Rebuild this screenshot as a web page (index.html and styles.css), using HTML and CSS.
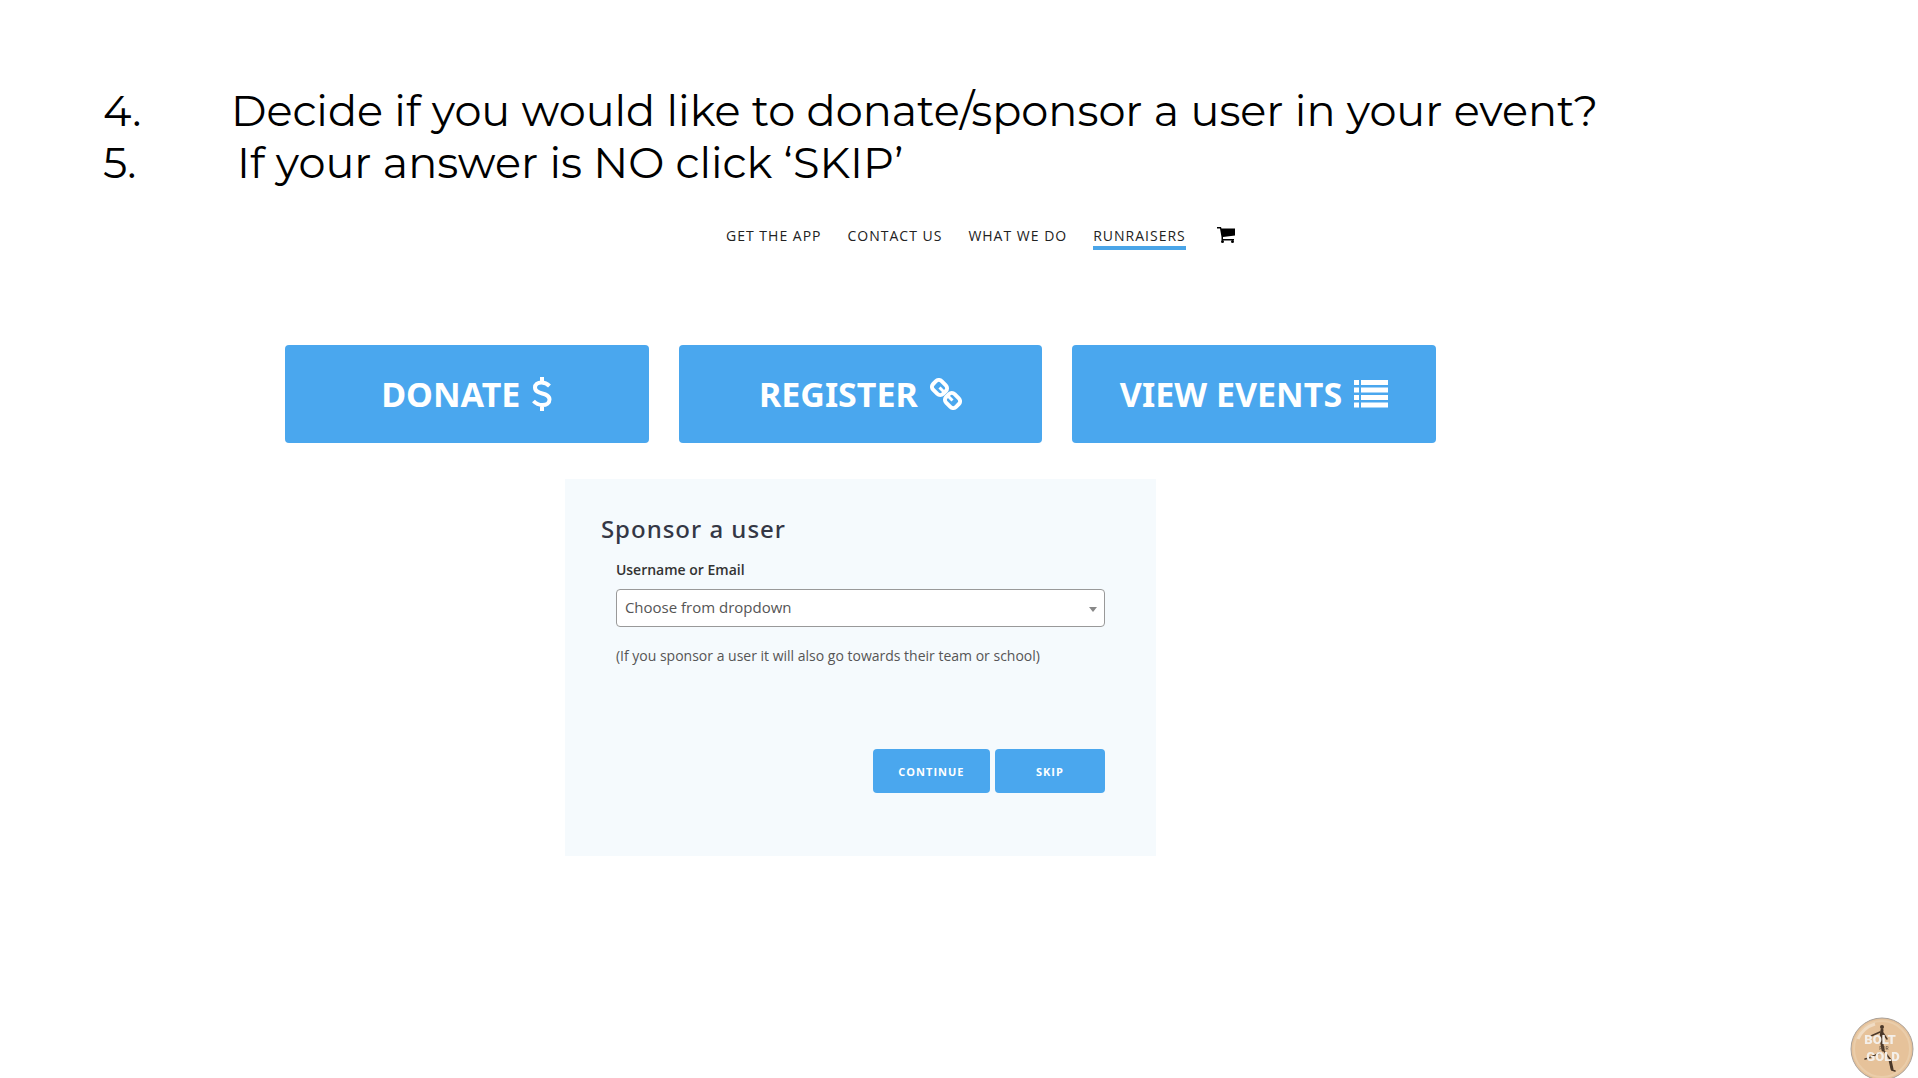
FILE: index.html
```html
<!DOCTYPE html>
<html lang="en">
<head>
<meta charset="UTF-8">
<meta name="viewport" content="width=device-width, initial-scale=1.0">
<title>Sponsor a user</title>
<link rel="stylesheet" href="styles.css">
</head>
<body>

<ol class="steps" start="4">
    <li><span class="number">4.</span><span>Decide if you would like to donate/sponsor a user in your event?</span></li>
    <li><span class="number">5.</span><span class="indent">If your answer is NO click ‘SKIP’</span></li>
</ol>

<div class="container">
    <nav class="menu">
        <a href="#">GET THE APP</a>
        <a href="#">CONTACT US</a>
        <a href="#">WHAT WE DO</a>
        <a href="#" class="active">RUNRAISERS</a>
        <a href="#" class="cart" aria-label="Cart">
            <svg width="18" height="16" viewBox="0 0 18 16">
                <path d="M0 0h4l.5 1.500H18v7L6 10v2h11v1.500H4.500V10L3 1.500H0z"/>
                <circle cx="5.500" cy="14.500" r="1.500"/>
                <circle cx="15.500" cy="14.500" r="1.500"/>
            </svg>
        </a>
    </nav>

    <div class="actions">
        <button type="button">DONATE
            <svg width="20" height="34" viewBox="0 0 20 34" fill="none" stroke="#fff" stroke-width="4">
                <path d="M17.500 9C15 6.500 12.500 5.500 9.500 5.500c-4 0-6.500 2-6.500 5 0 8 14.500 4 14.500 12 0 3.500-3 5.500-7 5.500-3.500 0-6.500-1.300-9-4M10 0v6M10 28v6"/>
            </svg>
        </button>
        <button type="button">REGISTER
            <svg width="32" height="32" viewBox="0 0 32 32" fill="none" stroke="#fff" stroke-width="4">
                <rect x="-7" y="-6" width="14" height="12" rx="4" transform="translate(9.500 9.500) rotate(45)"/>
                <rect x="-7" y="-6" width="14" height="12" rx="4" transform="translate(22.500 22.500) rotate(45)"/>
                <path d="M9.500 9.500l4 4M18.500 18.500l4 4" stroke-width="3"/>
            </svg>
        </button>
        <button type="button">VIEW EVENTS
            <svg width="34" height="28" viewBox="0 0 34 28" fill="#fff">
                <path d="M0 0h5v5H0zM7 0h27v5H7zM0 7.500h5v5H0zM7 7.500h27v5H7zM0 15h5v5H0zM7 15h27v5H7zM0 22.500h5v5H0zM7 22.500h27v5H7z"/>
            </svg>
        </button>
    </div>

    <form class="panel">
        <h2>Sponsor a user</h2>
        <div class="fields">
            <label for="user">Username or Email</label>
            <div class="select">
                <select id="user" name="user">
                    <option>Choose from dropdown</option>
                </select>
            </div>
            <p>(If you sponsor a user it will also go towards their team or school)</p>
            <div class="buttons">
                <button type="button" class="continue">CONTINUE</button>
                <button type="button" class="skip">SKIP</button>
            </div>
        </div>
    </form>
</div>

<svg class="logo" width="64" height="64" viewBox="0 0 64 64" role="img" aria-label="Bolt for Gold">
    <circle cx="32" cy="32" r="31" fill="#e6c29a" stroke="#a9a098" stroke-width="1"/>
    <circle cx="32" cy="32" r="28" fill="none" stroke="#eacdaa" stroke-width="2"/>
    <path d="M8 22A27 27 0 0 1 25 7" fill="none" stroke="#f0dcc4" stroke-width="3"/>
    <g fill="none" stroke="#4b3829" stroke-width="1.500" stroke-linecap="round" stroke-linejoin="round">
        <path d="M32 13l-1 8 2 12" stroke-width="3"/>
        <path d="M34 34l6 8 2 11 3 1M30 36l-11 5-4 1M30 15l-9 4M33 16l4 6"/>
        <path d="M40 43l2 9" stroke-width="3"/>
    </g>
    <circle cx="32" cy="10" r="2" fill="#4b3829"/>
    <text x="30" y="27" class="logo-text">BOLT</text>
    <text x="34" y="33" class="logo-small">FOR</text>
    <text x="33" y="44" class="logo-text">GOLD</text>
</svg>

</body>
</html>
```

FILE: styles.css
```css
* {
    box-sizing: border-box;
}
body {
    font-family: "Open Sans", "Noto Sans", sans-serif;
    background-color: #fff;
    margin: 0;
    color: #111;
}
.steps {
    list-style: none;
    margin: 0;
    padding: 85px 103px 0;
    font-family: Montserrat, Inter, sans-serif;
    font-size: 43px;
    font-weight: 400;
    line-height: 52px;
    color: #000;
}
.steps li {
    display: flex;
}
.number {
    flex: 0 0 128px;
}
.indent {
    padding-left: 6px;
}
.container {
    width: 60%;
    margin-left: 285px;
}
.menu {
    display: flex;
    justify-content: flex-end;
    gap: 26px;
    padding: 37px 201px 0 0;
    font-size: 14px;
    letter-spacing: 1px;
    line-height: 20px;
}
.menu a {
    color: #222;
    text-decoration: none;
    border-bottom: 4px solid transparent;
}
.menu .active {
    border-color: #4aa5e8;
}
.menu .cart {
    margin-left: 5px;
}
.cart svg {
    display: block;
    margin-top: 1px;
}
button {
    border: none;
    border-radius: 4px;
    background-color: #4aa7ee;
    color: #fff;
    font-family: inherit;
    cursor: pointer;
}
.actions {
    display: grid;
    grid-template-columns: repeat(3, 1fr);
    gap: 30px;
    margin-top: 95px;
}
.actions button {
    display: flex;
    justify-content: center;
    align-items: center;
    gap: 12px;
    height: 98px;
    font-family: "Noto Sans", sans-serif;
    font-size: 34px;
    font-weight: bold;
}
.panel {
    width: 591px;
    margin: 36px auto 0;
    padding: 32px 51px 63px 36px;
    background-color: #f5fafd;
}
h2 {
    margin: 0;
    font-family: "Noto Sans", sans-serif;
    font-size: 24px;
    font-weight: 500;
    letter-spacing: 1px;
    line-height: 36px;
    color: #343745;
}
.fields {
    padding: 12px 0 0 15px;
}
label {
    display: block;
    margin-bottom: 8px;
    font-size: 14px;
    font-weight: 600;
    line-height: 22px;
    color: #333;
}
.select {
    position: relative;
}
.select::after {
    content: "";
    position: absolute;
    right: 8px;
    top: 18px;
    border: 4px solid transparent;
    border-top: 5px solid #888;
    border-bottom: none;
}
select {
    display: block;
    width: 100%;
    height: 38px;
    padding: 0 8px 2px;
    appearance: none;
    border: 1px solid #999;
    border-radius: 4px;
    background-color: #fff;
    font-family: inherit;
    font-size: 15px;
    color: #555;
}
.fields p {
    margin: 18px 0 82px;
    font-size: 14px;
    line-height: 22px;
    color: #555;
}
.buttons {
    display: flex;
    justify-content: flex-end;
    gap: 5px;
}
.buttons button {
    height: 44px;
    font-size: 11px;
    font-weight: 700;
    letter-spacing: 1px;
}
.buttons .continue {
    width: 117px;
}
.buttons .skip {
    width: 110px;
}
.logo {
    position: fixed;
    right: 4px;
    bottom: -3px;
}
.logo-text {
    font-family: Roboto, sans-serif;
    font-size: 13px;
    font-weight: 900;
    text-anchor: middle;
    fill: #f4efe9;
}
.logo-small {
    font-family: Roboto, sans-serif;
    font-size: 5px;
    text-anchor: middle;
    fill: #5b4a3a;
}
```
